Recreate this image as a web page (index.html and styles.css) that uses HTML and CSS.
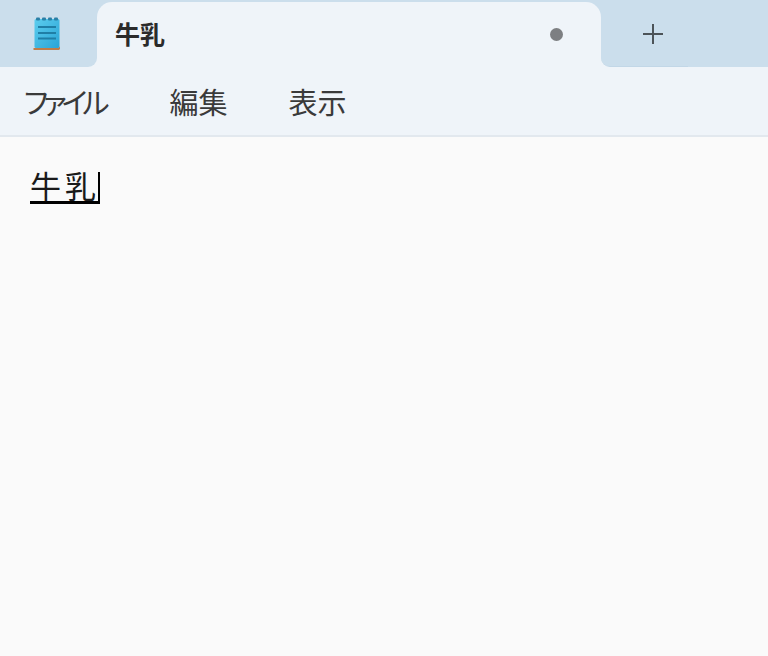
FILE: index.html
```html
<!DOCTYPE html>
<html lang="ja">
<head>
<meta charset="utf-8">
<title>牛乳</title>
<link rel="stylesheet" href="styles.css">
</head>
<body>
<div class="tabstrip">
  <div class="appicon">
    <svg width="28" height="36" viewBox="0 0 28 36">
      <defs>
        <linearGradient id="pad" x1="0" y1="0" x2="1" y2="1">
          <stop offset="0" stop-color="#5ccdee"/>
          <stop offset="1" stop-color="#2aa4d6"/>
        </linearGradient>
      </defs>
      <rect x="1.500" y="3" width="25" height="29" rx="1.500" fill="url(#pad)"/>
      <g fill="#2a7fa6"><rect x="3" y="1.500" width="4" height="3" rx="1"/><rect x="9" y="1.500" width="4" height="3" rx="1"/><rect x="15" y="1.500" width="4" height="3" rx="1"/><rect x="21" y="1.500" width="4" height="3" rx="1"/></g>
      <g fill="#1f7ea6"><rect x="5" y="10" width="18" height="2"/><rect x="5" y="16" width="18" height="2"/><rect x="5" y="21.500" width="18" height="2"/></g>
      <path d="M.5 32h25l1.500-1.500v2.500l-1 1H.5z" fill="#c07c48"/>
    </svg>
  </div>
  <div class="tab">
    <span class="tab-title">牛乳</span>
    <span class="dot"></span>
  </div>
  <div class="newtab">
    <svg width="22" height="22" viewBox="0 0 22 22"><path d="M11 1v20M1 11h20" stroke="#4c5358" stroke-width="2" fill="none"/></svg>
  </div>
  <div class="strip-fill"></div>
</div>
<nav class="menubar">
  <span class="menu-item menu-kana">ファイル</span>
  <span class="menu-item">編集</span>
  <span class="menu-item">表示</span>
</nav>
<main class="editor">
  <span class="composing">牛乳</span><span class="caret"></span>
</main>
</body>
</html>
```
FILE: styles.css
```css
* { box-sizing: border-box; }
html, body { margin: 0; height: 100%; }
body {
  display: flex;
  flex-direction: column;
  height: 656px;
  overflow: hidden;
  background: #fafafa;
  font-family: "Noto Sans CJK JP", "Noto Sans", sans-serif;
}
.tabstrip {
  display: flex;
  height: 67px;
  flex: none;
  background: linear-gradient(#cbdeec 0 50%, #eff4f9 50% 100%);
}
.appicon {
  width: 97px;
  flex: none;
  display: flex;
  align-items: center;
  justify-content: center;
  background: #cbdeec;
  border-bottom-right-radius: 9px;
}
.appicon svg { margin-left: -4px; }
.tab {
  width: 504px;
  flex: none;
  margin-top: 2px;
  background: #eff4f9;
  border-radius: 15px 15px 0 0;
  display: flex;
  align-items: center;
  justify-content: space-between;
  padding: 0 38px 3px 18px;
}
.tab-title {
  font-size: 25px;
  line-height: 30px;
  font-weight: 700;
  color: #2b2b2b;
}
.dot {
  width: 13px;
  height: 13px;
  border-radius: 50%;
  margin-top: 3px;
  background: #7d7f82;
}
.newtab {
  width: 87px;
  flex: none;
  display: flex;
  align-items: center;
  justify-content: center;
  padding: 2px 0 0 16px;
  background: #cbdeec;
  border-bottom: 1px solid #c2d7e7;
  border-bottom-left-radius: 9px;
}
.strip-fill {
  flex: 1;
  background: #cbdeec;
}
.menubar {
  display: flex;
  align-items: center;
  gap: 61px;
  height: 70px;
  flex: none;
  padding: 0 0 1px 24px;
  background: #eff4f9;
  border-bottom: 2px solid #e2e8ee;
}
.menu-item {
  font-size: 29px;
  color: #3a3a3a;
}
.menu-kana {
  font-feature-settings: "palt";
  letter-spacing: -5px;
  margin-right: 4px;
}
.editor {
  flex: 1;
  display: flex;
  align-items: flex-start;
  padding: 32px 0 0 30px;
}
.composing {
  font-size: 31px;
  line-height: 32px;
  letter-spacing: 4px;
  color: #1a1a1a;
  border-bottom: 3px solid #000;
}
.caret {
  width: 2px;
  height: 31px;
  margin: 3px 0 0 -2px;
  background: #000;
}
```
